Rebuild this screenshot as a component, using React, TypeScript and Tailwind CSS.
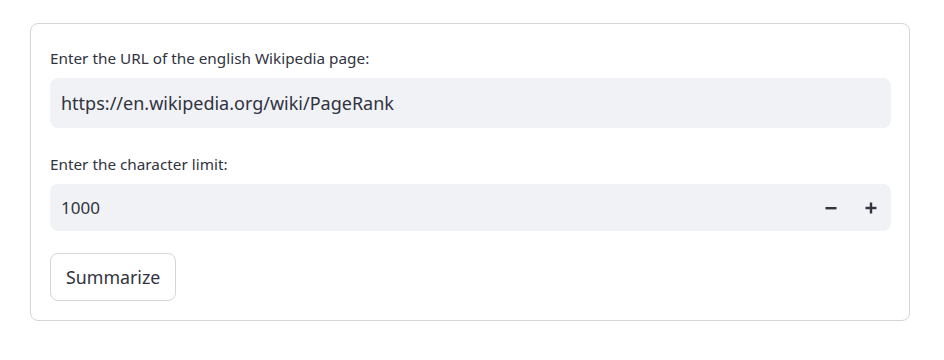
import React, { useState } from "react";

export default function App() {
  const [url, setUrl] = useState("https://en.wikipedia.org/wiki/PageRank");
  const [limit, setLimit] = useState(1000);

  return (
    <div className="w-[944px] h-[360px] bg-white pt-[23px] pl-[30px] font-['Noto_Sans',sans-serif] text-[#31333f]">
      <form
        className="w-[880px] h-[298px] border border-[#d6d6d9] rounded-lg pl-[19px] pr-[18px] pt-[24px] flex flex-col"
        onSubmit={(e) => e.preventDefault()}
      >
        {/* URL input */}
        <label className="text-[15.3px] leading-[20px] mb-[10px]">Enter the URL of the english Wikipedia page:</label>
        <input
          className="h-[50px] w-full rounded-lg bg-[#f0f2f6] px-[11px] text-[18px] outline-none"
          value={url}
          onChange={(e) => setUrl(e.target.value)}
        />

        {/* Character limit */}
        <label className="text-[15.3px] leading-[20px] mt-[26px] mb-[10px]">Enter the character limit:</label>
        <div className="h-[47px] w-full rounded-lg bg-[#f0f2f6] flex items-center">
          <input
            className="flex-1 h-full bg-transparent px-[11px] text-[17px] outline-none"
            value={limit}
            onChange={(e) => setLimit(Number(e.target.value) || 0)}
          />
          <button type="button" className="w-[40px] h-full flex items-center justify-center" onClick={() => setLimit(limit - 1)}>
            <svg width="12" height="12" viewBox="0 0 12 12"><rect x="0.5" y="5" width="11" height="2.4" fill="#31333f" /></svg>
          </button>
          <button type="button" className="w-[40px] h-full flex items-center justify-center" onClick={() => setLimit(limit + 1)}>
            <svg width="12" height="12" viewBox="0 0 12 12">
              <rect x="0.5" y="4.8" width="11" height="2.4" fill="#31333f" />
              <rect x="4.8" y="0.5" width="2.4" height="11" fill="#31333f" />
            </svg>
          </button>
        </div>

        <div className="mt-[22px]">
          <button type="submit" className="h-[48px] px-[15px] rounded-lg border border-[#d6d6d9] bg-white text-[17.8px]">
            Summarize
          </button>
        </div>
      </form>
    </div>
  );
}
